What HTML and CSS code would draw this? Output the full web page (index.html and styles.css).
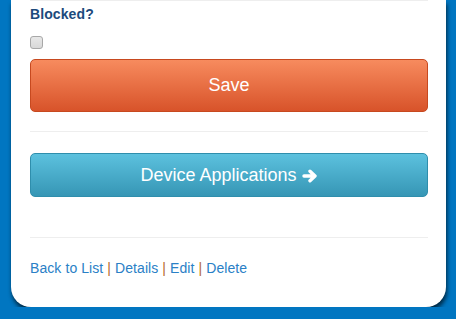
FILE: index.html
```html
<!DOCTYPE html>
<html lang="en">
<head>
    <meta charset="UTF-8">
    <meta name="viewport" content="width=device-width, initial-scale=1.0">
    <title>Edit Device</title>
    <link rel="stylesheet" href="styles.css">
</head>
<body>
    <div class="card">
        <hr class="rule top">
        <label class="field-label" for="blocked">Blocked?</label>
        <input type="checkbox" id="blocked" class="check" />
        <button class="btn btn-save">Save</button>

        <hr class="rule mid">
        <button class="btn btn-info">Device Applications
            <svg class="arrow" width="16" height="14" viewBox="0 0 16 14"><path d="M2 7H12.5M8 2.2L13 7L8 11.8" fill="none" stroke="#fff" stroke-width="3.4" stroke-linecap="round" stroke-linejoin="round"/></svg>
        </button>

        <hr class="rule low">
        <div class="links">
            <a href="#">Back to List</a> <span class="sep">|</span>
            <a href="#">Details</a> <span class="sep">|</span>
            <a href="#">Edit</a> <span class="sep">|</span>
            <a href="#">Delete</a>
        </div>
    </div>
</body>
</html>
```

FILE: styles.css
```css
body { margin: 0; background-color: #0176c1; font-family: "Liberation Sans", Arial, sans-serif; font-size: 14px; line-height: 20px; overflow: hidden; }
.card { margin: 0 10px 0 11px; padding: 0 18px 29px 19px; background-color: #fff; border-radius: 0 0 20px 20px; box-shadow: 1px 4px 4px rgba(0, 0, 0, 0.65); }
.rule { border: none; border-top: 1px solid #eee; margin: 0; }
.rule.mid { margin-top: 19px; }
.rule.low { margin-top: 40px; }
.field-label { display: block; margin-top: 3px; font-weight: bold; color: #1c4a7c; letter-spacing: 0.1px; }
.check { display: block; appearance: none; width: 13px; height: 13px; margin: 12px 0 0 0; background: linear-gradient(#e8e8e8, #d8d8d8); border: 1px solid #a8a8a8; border-radius: 3px; box-sizing: border-box; }
.btn { display: flex; align-items: center; justify-content: center; gap: 5px; width: 100%; color: #fff; font-family: inherit; font-size: 18px; border-radius: 5px; cursor: pointer; }
.btn-save { height: 53px; margin-top: 10px; background: linear-gradient(#f78b5e, #d8532a); border: 1px solid #c7491f; }
.btn-info { height: 44px; margin-top: 21px; background: linear-gradient(#5cc1de, #3696b5); border: 1px solid #2f8eac; }
.arrow { margin-top: 1px; }
.links { margin-top: 20px; letter-spacing: 0.08px; }
.links a { color: #2a80c6; text-decoration: none; }
.sep { color: #b4692c; }
```
